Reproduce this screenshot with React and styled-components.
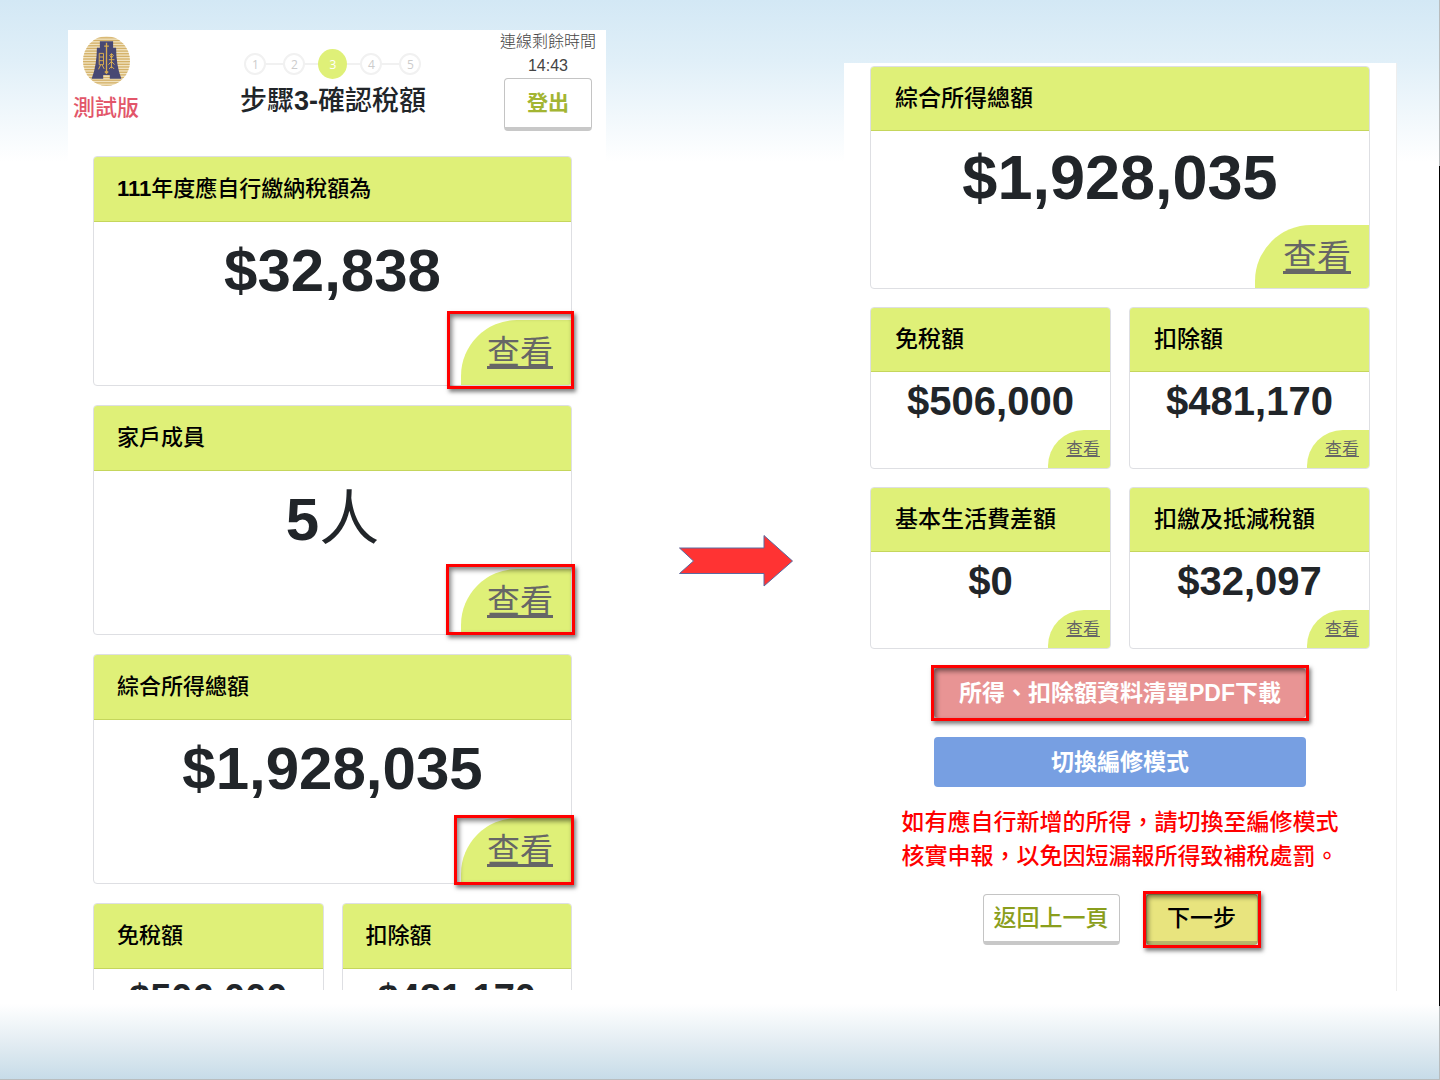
import React from "react";
import styled, { createGlobalStyle, css } from "styled-components";

const lime = "#dff078";
const ink = "#212529";

const GlobalStyle = createGlobalStyle`
  *, *::before, *::after { box-sizing: border-box; }
  body {
    margin: 0;
    color: ${ink};
    font-family: "Liberation Sans", "Noto Sans CJK TC", sans-serif;
  }
  h1, h2, p, ol { margin: 0; padding: 0; font-weight: 500; }
`;

const Slide = styled.main`
  display: grid;
  grid-template-columns: 538fr 238fr 553fr;
  min-height: 100vh;
  padding: 0 43px 0 68px;
  background:
    linear-gradient(#b9bcbd 166px, #000 166px, #000 calc(100% - 74px), #b9bcbd calc(100% - 74px)) right / 1px 100% no-repeat,
    linear-gradient(#b9bcbd, #b9bcbd) bottom / 100% 1px no-repeat,
    linear-gradient(#d3e8f5, #e0eff8 60px, #fff) top / 100% 162px no-repeat,
    linear-gradient(#fff, #e2ecf2 40px, #c6dbe8) bottom / 100% 76px no-repeat,
    #fff;
`;

const Screen = styled.section`
  align-self: start;
  display: flex;
  flex-direction: column;
  min-width: 0;
  background: #fff;
`;

const FirstScreen = styled(Screen)`
  margin-top: 30px;
`;

const SecondScreen = styled(Screen)`
  margin-top: 63px;
  padding: 3px 26px 46px;
  gap: 18px;
  border-right: 1px solid #eee;
`;

const Between = styled.div`
  display: flex;
  align-items: center;
  justify-content: center;
  padding: 42px 0 0 22px;
`;

const Header = styled.header`
  display: grid;
  grid-template-columns: 1fr auto 1fr;
  align-items: start;
  height: 126px;
  padding-right: 8px;
`;

const Brand = styled.div`
  display: flex;
  flex-direction: column;
  align-items: center;
  width: 76px;
  padding-top: 6px;
`;

const TrialLabel = styled.p`
  && { font-weight: 500; }
  color: #e2566a;
  font-size: 22px;
  line-height: 32px;
  margin-top: 6px;
`;

const Progress = styled.div`
  display: flex;
  flex-direction: column;
  align-items: center;
  padding-top: 19px;
`;

const Steps = styled.ol`
  display: flex;
  align-items: center;
  list-style: none;
`;

const Step = styled.li`
  display: flex;
  align-items: center;
  justify-content: center;
  width: 22px;
  height: 22px;
  border: 2px solid #f1f1f1;
  border-radius: 50%;
  color: #ccc;
  font: 12px "Open Sans", sans-serif;

  ${(p) => p.$current && css`
    width: 29px;
    height: 30px;
    border: 0;
    background: ${lime};
    color: #fff;
  `}
`;

const StepLine = styled.li`
  width: ${(p) => (p.$long ? 17 : 13)}px;
  height: 2px;
  background: #f1f1f1;
`;

const Title = styled.h1`
  font-size: 27px;
  line-height: 40px;
  margin-top: 2px;
`;

const Session = styled.div`
  display: flex;
  flex-direction: column;
  align-items: center;
  justify-self: end;
  width: 100px;
`;

const SessionText = styled.p`
  && { font-weight: 300; }
  color: #444;
  font-size: 16px;
  line-height: 24px;
  white-space: nowrap;
`;

const Button = styled.button`
  display: block;
  border: 1px solid #c4c4c4;
  border-bottom: 4px solid #c8c8c8;
  border-radius: 4px;
  background: #fff;
  color: #8a9e1c;
  padding: 0;
  font-family: inherit;
  font-size: 23px;
  font-weight: 500;
  line-height: 46px;
`;

const LogoutButton = styled(Button)`
  width: 88px;
  color: #a3b532;
  font-size: 21px;
  font-weight: 700;
  line-height: 48px;
`;

const BackButton = styled(Button)`
  width: 137px;
`;

const NextButton = styled(Button)`
  width: 112px;
  border-color: #b9b76b;
  background: #e8e47e;
  color: #000;
`;

const WideButton = styled(Button)`
  width: 100%;
  border: 0;
  background: ${(p) => (p.$tone === "red" ? "#e89494" : "#779fe2")};
  color: #fff;
  font-weight: 700;
  line-height: 50px;
`;

const CardList = styled.div`
  display: flex;
  flex-direction: column;
  gap: 19px;
  padding: 0 34px 0 25px;
`;

const CardRow = styled.div`
  display: grid;
  grid-template-columns: 1fr 1fr;
  gap: 18px;
`;

const CutRow = styled(CardRow)`
  max-height: 87px;
  overflow: hidden;
`;

const CardBox = styled.article`
  display: flex;
  flex-direction: column;
  border: 1px solid #dedfe3;
  border-radius: 4px;
  background: #fff;
`;

const CardTitle = styled.h2`
  padding-left: ${(p) => (p.$wide ? 24 : 23)}px;
  border-bottom: 1px solid #c5d65c;
  border-radius: 3px 3px 0 0;
  background: ${lime};
  color: #000;
  font-size: ${(p) => (p.$wide ? 23 : 22)}px;
  line-height: ${(p) => (p.$wide ? 63 : 64)}px;
`;

const numberSize = {
  left: css`height: 98px; font-size: 60px; line-height: 98px;`,
  right: css`height: 94px; font-size: 63px; line-height: 92px;`,
  small: css`height: 58px; font-size: 40px; line-height: 58px;`,
  preview: css`height: 58px; font-size: 38px; line-height: 58px;`,
};

const Amount = styled.p`
  && { font-weight: 700; }
  text-align: center;
  ${(p) => numberSize[p.$size]}
`;

const Unit = styled.span`
  font-weight: 400;
`;

const Corner = styled.div`
  position: relative;
  align-self: flex-end;
`;

const smallCorner = css`
  width: 62px;
  height: 38px;
  padding-right: 10px;
  border-top-left-radius: 36px;
  font-size: 17px;
  line-height: 40px;
`;

const cornerSize = {
  left: css`width: 110px; height: 65px; font-size: 33px; line-height: 66px; padding-right: 18px; border-top-left-radius: 56px;`,
  right: css`width: 114px; height: 63px; font-size: 34px; line-height: 65px; padding-right: 18px; border-top-left-radius: 56px;`,
  small: smallCorner,
  preview: smallCorner,
};

const ViewLink = styled.a`
  display: block;
  background: ${lime};
  border-bottom-right-radius: 3px;
  color: #666;
  text-align: right;
  text-decoration: underline;
  ${(p) => cornerSize[p.$size]}
`;

const Highlight = styled.span`
  position: absolute;
  inset: ${(p) => p.$inset};
  border: 3px solid #f00;
  box-shadow: 2px 3px 4px rgba(0, 0, 0, 0.5), inset 2px 3px 5px rgba(0, 0, 0, 0.5);
  pointer-events: none;
`;

const Marked = styled.div`
  position: relative;
`;

const Actions = styled.div`
  display: flex;
  flex-direction: column;
  gap: 19px;
  padding: 1px 64px 0;
`;

const Notice = styled.p`
  color: #f00;
  font-size: 23px;
  line-height: 34px;
  text-align: left;
  align-self: center;
  white-space: nowrap;
`;

const Pager = styled.nav`
  display: flex;
  justify-content: center;
  gap: 26px;
  padding-top: 3px;
`;

function Emblem() {
  const rows = Array.from({ length: 19 }, (_, i) => 51 + i * 8);
  return (
    <svg width="47" height="50" viewBox="70 48 142 150" aria-hidden="true">
      <defs>
        <clipPath id="disc"><ellipse cx="141" cy="123" rx="71" ry="75" /></clipPath>
      </defs>
      <g clipPath="url(#disc)">
        <rect x="70" y="48" width="142" height="150" fill="#f1e3c0" />
        {rows.map((y) => <rect key={y} x="70" y={y} width="142" height="4" fill="#d4b168" />)}
      </g>
      <path d="M121 63h40v20h9c0 34 5 66 16 94h-35v-12h-20v12H96c11-28 16-60 16-94h9z" fill="#484873" />
      <g fill="none" stroke="#d9ad50" strokeWidth="3">
        <path d="M141 68v92M134 78h14M136 155l5 5 5-5" strokeWidth="4" />
        <path d="M119 100h13v34h-13zM119 111h13M119 122h13M123 135l-6 13M128 135l6 12" />
        <path d="M156 101v44M148 119h17M151 106l5-5 6 5-6 8zM156 124l-9 10M156 124l9 10M149 147l7-8 8 8" />
      </g>
    </svg>
  );
}

function Arrow() {
  return (
    <svg width="116" height="54" viewBox="0 0 116 54" aria-hidden="true">
      <path d="M1.5 14H86V1.5L114.500 27 86 52V39.500H1.500L15.500 27z" fill="#f33" stroke="#5b6aa0" />
    </svg>
  );
}

function Card({ title, amount, unit, size, wide, mark }) {
  return (
    <CardBox>
      <CardTitle $wide={wide}>{title}</CardTitle>
      <Amount $size={size}>{amount}{unit && <Unit>{unit}</Unit>}</Amount>
      <Corner>
        <ViewLink href="#view" $size={size}>查看</ViewLink>
        {mark && <Highlight $inset={mark} />}
      </Corner>
    </CardBox>
  );
}

export default function App() {
  return (
    <>
      <GlobalStyle />
      <Slide lang="zh-Hant">
        <FirstScreen>
          <Header>
            <Brand>
              <Emblem />
              <TrialLabel>測試版</TrialLabel>
            </Brand>
            <Progress>
              <Steps>
                <Step>1</Step>
                <StepLine $long />
                <Step>2</Step>
                <StepLine />
                <Step $current aria-current="step">3</Step>
                <StepLine />
                <Step>4</Step>
                <StepLine $long />
                <Step>5</Step>
              </Steps>
              <Title>步驟<b>3-</b>確認稅額</Title>
            </Progress>
            <Session>
              <SessionText>連線剩餘時間</SessionText>
              <SessionText>14:43</SessionText>
              <LogoutButton type="button">登出</LogoutButton>
            </Session>
          </Header>
          <CardList>
            <Card title={<><b>111</b>年度應自行繳納稅額為</>} amount="$32,838" size="left" mark="-9px -3px -4px -14px" />
            <Card title="家戶成員" amount="5" unit="人" size="left" mark="-5px -4px -1px -15px" />
            <Card title="綜合所得總額" amount="$1,928,035" size="left" mark="-3px -3px -2px -7px" />
            <CutRow>
              <Card title="免稅額" amount="$506,000" size="preview" />
              <Card title="扣除額" amount="$481,170" size="preview" />
            </CutRow>
          </CardList>
        </FirstScreen>

        <Between><Arrow /></Between>

        <SecondScreen>
          <Card title="綜合所得總額" amount="$1,928,035" size="right" wide />
          <CardRow>
            <Card title="免稅額" amount="$506,000" size="small" wide />
            <Card title="扣除額" amount="$481,170" size="small" wide />
          </CardRow>
          <CardRow>
            <Card title="基本生活費差額" amount="$0" size="small" wide />
            <Card title="扣繳及抵減稅額" amount="$32,097" size="small" wide />
          </CardRow>
          <Actions>
            <Marked>
              <WideButton type="button" $tone="red">所得、扣除額資料清單PDF下載</WideButton>
              <Highlight $inset="-3px" />
            </Marked>
            <WideButton type="button" $tone="blue">切換編修模式</WideButton>
          </Actions>
          <Notice>如有應自行新增的所得，請切換至編修模式<br />核實申報，以免因短漏報所得致補稅處罰。</Notice>
          <Pager>
            <BackButton type="button">返回上一頁</BackButton>
            <Marked>
              <NextButton type="button">下一步</NextButton>
              <Highlight $inset="-3px" />
            </Marked>
          </Pager>
        </SecondScreen>
      </Slide>
    </>
  );
}
